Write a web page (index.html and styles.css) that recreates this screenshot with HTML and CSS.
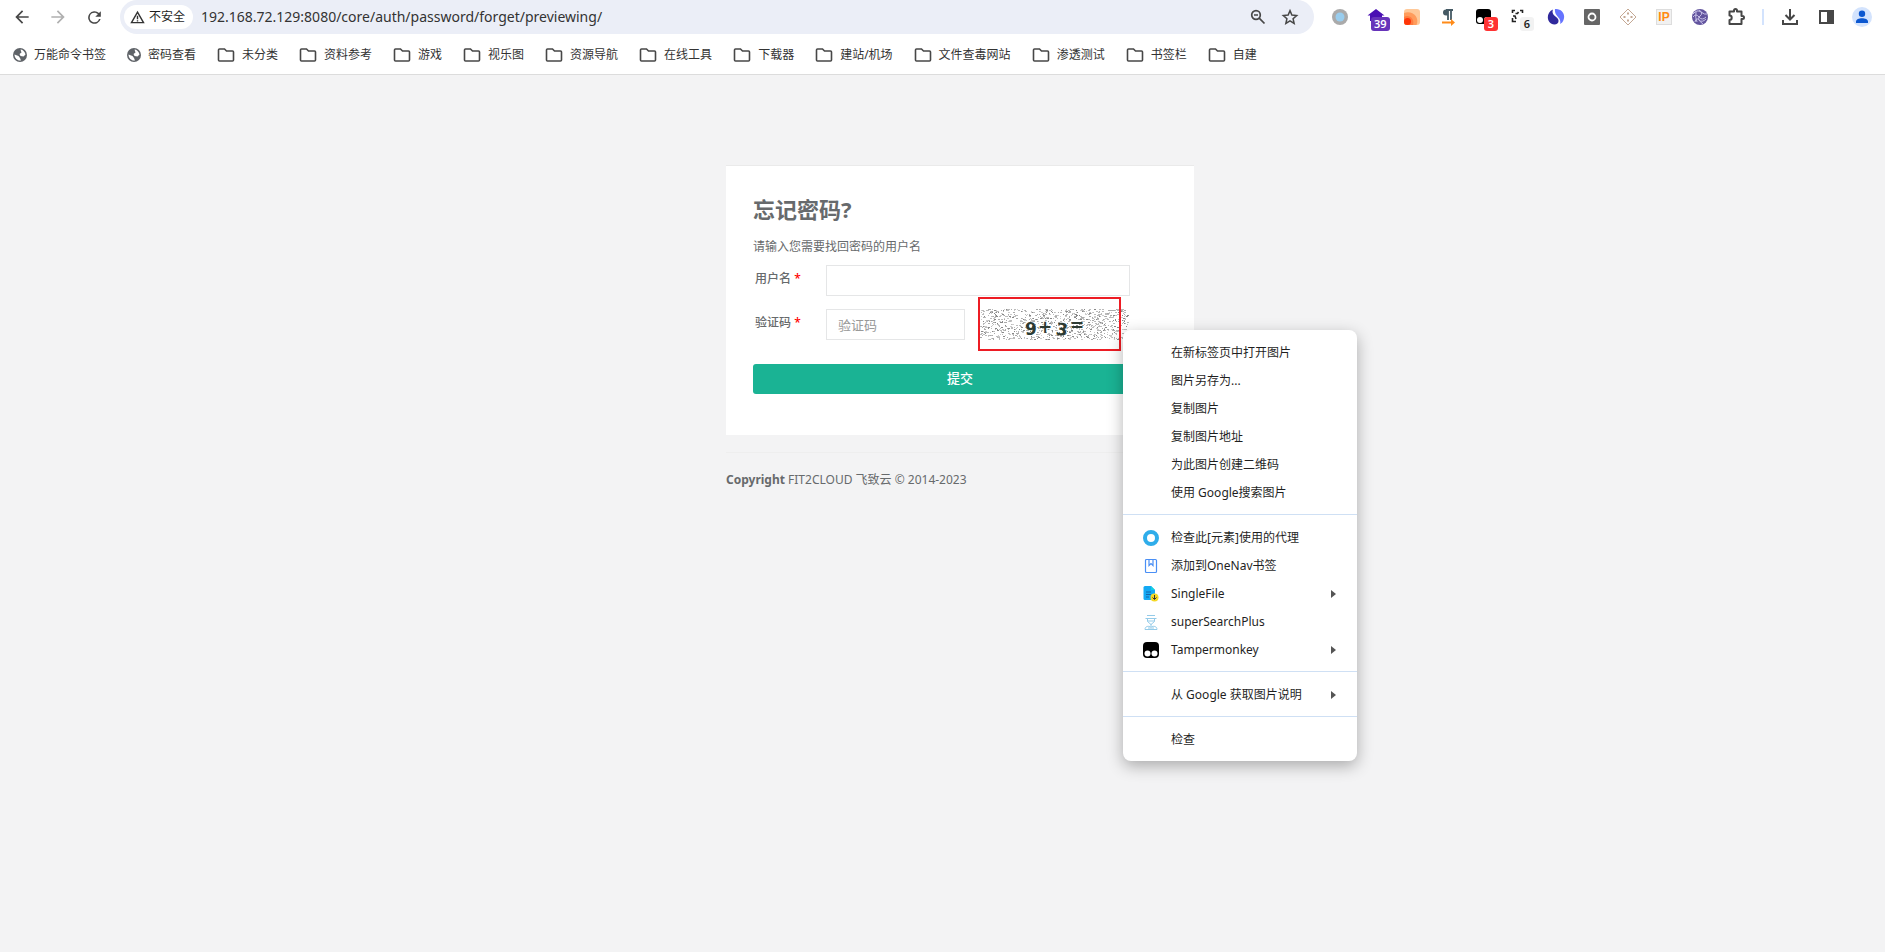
FILE: index.html
```html
<!DOCTYPE html>
<html lang="zh-CN">
<head>
<meta charset="utf-8">
<title>忘记密码</title>
<link rel="stylesheet" href="styles.css">
</head>
<body>
<header class="browser">
  <div class="toolbar">
    <button class="tool" aria-label="后退"><svg width="20" height="20" viewBox="0 0 24 24" fill="#474747"><path d="M20 11H7.800l5.600-5.600L12 4l-8 8 8 8 1.400-1.400L7.800 13H20z"/></svg></button>
    <button class="tool" aria-label="前进"><svg width="20" height="20" viewBox="0 0 24 24" fill="#b0b0b0"><path d="M4 13h12.200l-5.600 5.600L12 20l8-8-8-8-1.400 1.400 5.600 5.600H4z"/></svg></button>
    <button class="tool" aria-label="刷新"><svg width="19" height="19" viewBox="0 0 24 24" fill="#474747"><path d="M17.650 6.350A8 8 0 1 0 19.730 14h-2.080A6 6 0 1 1 12 6c1.660 0 3.140.690 4.220 1.780L13 11h7V4z"/></svg></button>
    <div class="omnibox">
      <button class="chip"><svg width="15" height="15" viewBox="0 0 16 16" fill="none" stroke="#333" stroke-width="1.500"><path d="M8 2.200 14.400 13.500H1.600z"/><path d="M8 6.200v3.600M8 10.800v1.500"/></svg><span>不安全</span></button>
      <input class="url" aria-label="地址" value="192.168.72.129:8080/core/auth/password/forget/previewing/">
      <button class="inner" aria-label="缩放"><svg width="18" height="18" viewBox="0 0 18 18" fill="none" stroke="#474747" stroke-width="1.700"><circle cx="7" cy="7" r="4.300"/><path d="M10.200 10.200 15.500 15.500M5 7h4"/></svg></button>
      <button class="inner" aria-label="收藏"><svg width="18" height="18" viewBox="0 0 24 24" fill="none" stroke="#474747" stroke-width="2"><path d="m12 3.500 2.500 5.900 6.400.6-4.800 4.200 1.400 6.300-5.500-3.300-5.500 3.300 1.400-6.300L3.100 10l6.400-.6z"/></svg></button>
    </div>
    <button class="tool" aria-label="代理"><svg width="18" height="18"><circle cx="9" cy="9" r="8" fill="#aaa"/><circle cx="9" cy="9" r="4.500" fill="#99cdee"/></svg></button>
    <button class="tool" aria-label="OneNav"><svg width="18" height="18"><path d="M9 1 17.500 7.500H15V13H3V7.500H.5z" fill="#4a0fb3"/></svg><span class="count violet">39</span></button>
    <button class="tool" aria-label="扩展"><svg width="18" height="18"><rect x="1" y="1" width="16" height="16" rx="3" fill="#ffc999"/><path d="M1 5C9 2 17 9 13.500 17H4a3 3 0 0 1-3-3z" fill="#ff9c5c"/><path d="M1 9c5-3 11 2 9 8H4a3 3 0 0 1-3-3z" fill="#ff7d40"/><circle cx="4.500" cy="13.500" r="3.500" fill="#ff3508"/></svg></button>
    <button class="tool" aria-label="段落"><svg width="18" height="18"><path d="M14 2H7M9 2v10M12 2v10" fill="none" stroke="#455a64" stroke-width="1.800"/><path d="M9 1.500v6H7a3 3 0 0 1 0-6z" fill="#455a64"/><path d="M3 13.500h9v-2.500l4 3.500-4 3.500v-2.500H3z" fill="#ff8b19"/></svg></button>
    <button class="tool" aria-label="Tampermonkey"><svg width="18" height="18"><rect x="1" y="1" width="15" height="15" rx="3"/><circle cx="5" cy="12" r="3" fill="#fff"/><circle cx="12" cy="12" r="3" fill="#fff"/></svg><span class="count red">3</span></button>
    <button class="tool" aria-label="截取"><svg width="18" height="18" fill="none" stroke="#222" stroke-width="1.600"><path d="M1.500 5V2.500H4M9 2.500h2.500V5M1.500 10v3.500H5M4.500 5.500h2l1-1.500M2 8h2l1 3"/></svg><span class="count pale">6</span></button>
    <button class="tool" aria-label="扩展"><svg width="18" height="18"><path d="M6 1.500C0 4-1 12 4 15.500c5 3 9-1 7-4.500-2-3-7-4-5-9.500" fill="#30299c"/><path d="M8 1c6-1 11 5 8.500 11-.5 2-2 3-3.500 4 2-7-6-7-5-15" fill="#6674ff"/></svg></button>
    <button class="tool" aria-label="扩展 O"><svg width="18" height="18"><rect x="1" y="1" width="16" height="16" rx="1" fill="#666"/><circle cx="9" cy="9" r="3.500" fill="none" stroke="#fff" stroke-width="1.800"/></svg></button>
    <button class="tool" aria-label="扩展"><svg width="18" height="18" fill="none" stroke="#c4a894"><path d="m9 1 8 8-8 8-8-8z"/><path d="M9 4.500v2M9 11.500v2M4.500 9h2M11.500 9h2" stroke-width="2"/></svg></button>
    <button class="tool" aria-label="IP"><span class="ip">IP</span></button>
    <button class="tool" aria-label="扩展"><svg width="18" height="18"><circle cx="9" cy="9" r="8" fill="#62549e"/><path d="M2 6q4-5 8-2t6 2M2 9q3-4 6 0t7 0M4 14q1-5 4-2t7-1M8 2q5 3 1 6t3 8M5 4q-1 6 1 10" fill="none" stroke="#c7c1e8"/></svg></button>
    <button class="tool" aria-label="扩展程序"><svg width="20" height="20" viewBox="0 0 20 20" fill="none" stroke="#474747" stroke-width="2"><path d="M3.500 4.500H8V3.500a1.500 1.500 0 0 1 3 0v1h4.500V9h1a1.500 1.500 0 0 1 0 3h-1v5h-12v-4a2.200 2.200 0 0 0 0-4.400z" stroke-linejoin="round"/></svg></button>
    <span class="divider"></span>
    <button class="tool" aria-label="下载"><svg width="18" height="18" fill="none" stroke="#474747" stroke-width="2"><path d="M9 1v10M4.500 7 9 11.500 13.500 7M2 12v4h14v-4"/></svg></button>
    <button class="tool" aria-label="侧边栏"><svg width="18" height="18"><rect x="3" y="3" width="13" height="12" fill="none" stroke="#474747" stroke-width="2"/><path d="M10 3h6v12h-6z" fill="#474747"/></svg></button>
    <button class="tool" aria-label="个人资料"><svg width="20" height="20"><circle cx="10" cy="10" r="10" fill="#d3e3fd"/><circle cx="10" cy="6.800" r="3.200" fill="#0b57d0"/><path d="M4 16v-1.500c0-4.500 12-4.500 12 0V16z" fill="#0b57d0"/></svg></button>
  </div>
  <nav class="bookmarks">
    <a href="#"><svg width="16" height="16"><use href="#globe"/></svg>万能命令书签</a>
    <a href="#"><svg width="16" height="16"><use href="#globe"/></svg>密码查看</a>
    <a href="#"><svg width="20" height="16"><use href="#folder"/></svg>未分类</a>
    <a href="#"><svg width="20" height="16"><use href="#folder"/></svg>资料参考</a>
    <a href="#"><svg width="20" height="16"><use href="#folder"/></svg>游戏</a>
    <a href="#"><svg width="20" height="16"><use href="#folder"/></svg>视乐图</a>
    <a href="#"><svg width="20" height="16"><use href="#folder"/></svg>资源导航</a>
    <a href="#"><svg width="20" height="16"><use href="#folder"/></svg>在线工具</a>
    <a href="#"><svg width="20" height="16"><use href="#folder"/></svg>下载器</a>
    <a href="#"><svg width="20" height="16"><use href="#folder"/></svg>建站/机场</a>
    <a href="#"><svg width="20" height="16"><use href="#folder"/></svg>文件查毒网站</a>
    <a href="#"><svg width="20" height="16"><use href="#folder"/></svg>渗透测试</a>
    <a href="#"><svg width="20" height="16"><use href="#folder"/></svg>书签栏</a>
    <a href="#"><svg width="20" height="16"><use href="#folder"/></svg>自建</a>
  </nav>
</header>

<main class="page">
  <div class="column">
    <form class="card">
      <h2>忘记密码?</h2>
      <p>请输入您需要找回密码的用户名</p>
      <div class="field">
        <label for="user">用户名 <span class="req">*</span></label>
        <input id="user" type="text">
      </div>
      <div class="field">
        <label for="code">验证码 <span class="req">*</span></label>
        <div class="pair">
          <input id="code" type="text" placeholder="验证码">
          <div class="captcha">
            <svg id="noise" width="152" height="32" viewBox="0 0 152 32">
              <g class="sum"><text x="47" y="26">9</text><text x="60" y="24">+</text><text x="78" y="26" transform="rotate(8 82 20)">3</text><text x="92" y="22">=</text></g>
            </svg>
            <span class="marker"></span>
          </div>
        </div>
      </div>
      <button class="submit" type="button">提交</button>
    </form>
    <hr>
    <footer><strong>Copyright</strong> FIT2CLOUD 飞致云 © 2014-2023</footer>
  </div>
</main>

<div class="menu" role="menu">
  <button role="menuitem">在新标签页中打开图片</button>
  <button role="menuitem">图片另存为...</button>
  <button role="menuitem">复制图片</button>
  <button role="menuitem">复制图片地址</button>
  <button role="menuitem">为此图片创建二维码</button>
  <button role="menuitem">使用 Google搜索图片</button>
  <hr>
  <button role="menuitem"><svg class="icon" width="16" height="16"><circle cx="8" cy="8" r="6" fill="none" stroke="#2fadea" stroke-width="4"/></svg>检查此[元素]使用的代理</button>
  <button role="menuitem"><svg class="icon" width="16" height="16" fill="none" stroke="#4a8ff5" stroke-width="1.200"><rect x="2.500" y="1.500" width="11" height="13" rx="1"/><path d="M6 2v5.500l2-2 2 2V2"/></svg>添加到OneNav书签</button>
  <button role="menuitem"><svg class="icon" width="16" height="16"><path d="M2 0h6l4 4v10H2q-1.500 0-1.500-1.500v-11Q.5 0 2 0z" fill="#13a9f4"/><path d="M8 0l4 4H8z" fill="#13d0e0"/><path d="M3 6h5M3 8.500h5M3 11h3" stroke="#1565a8"/><circle cx="11.500" cy="11.500" r="4" fill="#f6d925"/><path d="M11.500 9v4M9.500 11.500l2 2 2-2" fill="none" stroke="#333"/></svg>SingleFile<span class="arrow"></span></button>
  <button role="menuitem"><svg class="icon" width="16" height="16" fill="none" stroke="#94cbe9"><path d="M4 1.500h8M2.500 4.500h11M4.500 5v2.500L8 10.500l3.500-3V5M4.500 7h7M8 10v2M2 15.500c0-3 3-4 6-2.500 3-1.500 6-.500 6 2.500zM5 14h6"/></svg>superSearchPlus</button>
  <button role="menuitem"><svg class="icon" width="16" height="16"><rect width="16" height="16" rx="4"/><circle cx="4.500" cy="11.500" r="3" fill="#fff"/><circle cx="11.500" cy="11.500" r="3" fill="#fff"/></svg>Tampermonkey<span class="arrow"></span></button>
  <hr>
  <button role="menuitem">从 Google 获取图片说明<span class="arrow"></span></button>
  <hr>
  <button role="menuitem">检查</button>
</div>

<svg class="defs" width="0" height="0">
  <symbol id="globe" viewBox="0 0 16 16"><circle cx="8" cy="8" r="7" fill="#5f6368"/><path d="M8.500 2.500c2 0 4.500 2 5 5l-2 2-3-.500-1-2 2-1.500zM2.500 7.500l4 1.500 1.500 2 1 2.500c-3 .500-6.500-2-6.500-6z" fill="#fff"/></symbol>
  <symbol id="folder" viewBox="0 0 20 16"><path d="M3.500 2h5l2 2h6q1 0 1 1v8q0 1-1 1h-13q-1 0-1-1V3q0-1 1-1z" fill="none" stroke="#474747" stroke-width="1.600"/></symbol>
</svg>
<script src="noise.js"></script>
</body>
</html>
```
FILE: styles.css
```css
* { box-sizing: border-box; }
body {
  margin: 0;
  min-height: 100vh;
  background: #f3f3f4;
  color: #676a6c;
  font: 12px/20px "Noto Sans", "Noto Sans CJK SC", sans-serif;
}
button, input { font: inherit; color: inherit; }
button { border: 0; background: none; padding: 0; }
.defs { position: absolute; }

.browser { background: #fff; border-bottom: 1px solid #dcdcdc; }
.toolbar { display: flex; align-items: center; height: 34px; padding: 0 5px 0 4px; }
.tool { position: relative; display: grid; place-items: center; flex: 0 0 36px; height: 34px; }
.tool svg { display: block; }
.omnibox {
  display: flex; align-items: center; flex: 1; height: 34px;
  margin: 0 8px; padding: 0 8px 0 4px;
  background: #ebeef7; border-radius: 17px;
}
.chip {
  display: flex; align-items: center; gap: 4px; height: 24px; padding: 0 8px 0 6px;
  background: #fff; border-radius: 12px; color: #1f1f1f;
}
.url { flex: 1; margin-left: 8px; padding: 0; border: 0; background: none; color: #333; font-size: 14px; }
.inner { display: grid; place-items: center; width: 32px; height: 32px; }
.count {
  position: absolute; left: 14px; top: 17px; min-width: 14px; height: 14px; padding: 0 3px;
  border-radius: 3px; color: #fff; font-weight: 600; font-size: 11px; line-height: 14px;
}
.violet { left: 13px; background: #6734ba; }
.red { left: 18px; background: #f33; }
.pale { left: 18px; background: #f2f2f2; color: #222; }
.ip {
  width: 16px; height: 16px; border: 1px solid #ddd; background: #f1f1f1;
  color: #ff8a10; font: bold 12px/14px "Liberation Sans", sans-serif;
}
.divider { width: 2px; height: 16px; margin: 0 8px; background: #d3e3fd; }
.bookmarks { display: flex; align-items: center; gap: 20px; height: 40px; padding: 1px 12px 0; }
.bookmarks a { display: flex; align-items: center; gap: 6px; color: #333; text-decoration: none; white-space: nowrap; }

.page { display: flex; justify-content: center; padding: 90px 0 0 35px; }
.column { width: 468px; }
.card { padding: 28px 27px 41px; background: #fff; border-top: 1px solid #eaeaea; }
h2 { margin: 0; font-size: 22px; line-height: 30px; font-weight: 700; }
p { margin: 13px 0 8px; }
.field { display: grid; grid-template-columns: 71px 304px; align-items: start; margin-bottom: 13px; padding-left: 2px; }
.field label { padding-top: 4px; font-weight: 500; }
.req { color: #f00; }
.field input { width: 100%; height: 31px; padding: 0 11px; border: 1px solid #e5e6e7; background: #fff; font-size: 13px; }
.field input::placeholder { color: #999; }
.pair { display: grid; grid-template-columns: 139px 152px; gap: 13px; }
.captcha { position: relative; height: 31px; }
.captcha svg { display: block; }
.sum { fill: #2d3b33; font: bold 17px/20px "DejaVu Sans", sans-serif; }
.marker { position: absolute; left: 0; top: -12px; width: 143px; height: 54px; border: 2px solid #ed1c24; }
.submit { width: 100%; height: 30px; margin-top: 11px; padding-bottom: 2px; background: #1ab394; border-radius: 3px; color: #fff; font-size: 13px; font-weight: 500; }
.column hr { margin: 17px 0; border: 0; border-top: 1px solid #eee; }

.menu {
  position: absolute; left: 1123px; top: 330px; width: 234px; padding: 9px 0 7px;
  background: #fff; border-radius: 8px; box-shadow: 0 5px 16px rgba(0, 0, 0, .3);
}
.menu button { position: relative; display: flex; align-items: center; width: 100%; height: 28px; padding: 0 21px 0 48px; color: #1f1f1f; }
.menu hr { margin: 7px 0 9px; border: 0; border-top: 1px solid #cfe0f4; }
.icon { position: absolute; left: 20px; top: 6px; }
.arrow { margin-left: auto; border: 4px solid transparent; border-left: 5px solid #555; border-right: 0; }
```
FILE: noise.js
```js
// Speckle the captcha with a fixed pseudo-random pattern.
const svg = document.getElementById("noise");
let seed = 7;
const rand = () => (seed = (seed * 16807) % 2147483647) / 2147483647;
const greys = ["#888", "#aaa", "#bbb", "#bbb", "#ccc"];
for (let i = 0; i < 1050; i++) {
  const dot = document.createElementNS("http://www.w3.org/2000/svg", "rect");
  dot.setAttribute("x", Math.floor(rand() * 150));
  dot.setAttribute("y", Math.floor(rand() * 31));
  dot.setAttribute("width", rand() > 0.6 ? 2 : 1);
  dot.setAttribute("height", 1);
  dot.setAttribute("fill", greys[Math.floor(rand() * greys.length)]);
  svg.prepend(dot);
}
```
